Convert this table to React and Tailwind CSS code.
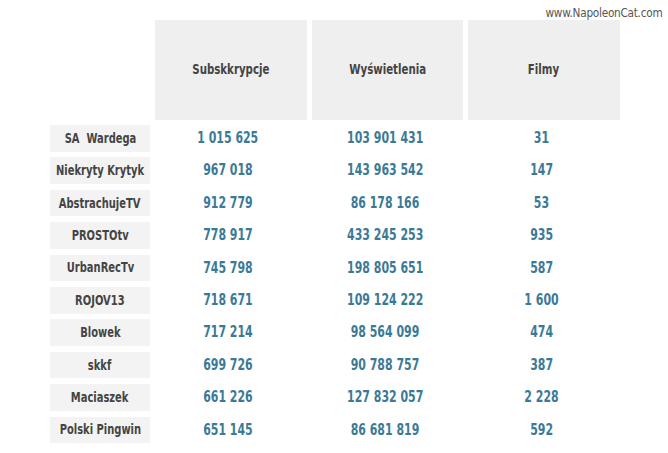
const rows = [
  ['SA  Wardega', '1 015 625', '103 901 431', '31'],
  ['Niekryty Krytyk', '967 018', '143 963 542', '147'],
  ['AbstrachujeTV', '912 779', '86 178 166', '53'],
  ['PROSTOtv', '778 917', '433 245 253', '935'],
  ['UrbanRecTv', '745 798', '198 805 651', '587'],
  ['ROJOV13', '718 671', '109 124 222', '1 600'],
  ['Blowek', '717 214', '98 564 099', '474'],
  ['skkf', '699 726', '90 788 757', '387'],
  ['Maciaszek', '661 226', '127 832 057', '2 228'],
  ['Polski Pingwin', '651 145', '86 681 819', '592'],
];

const headers = ['Subskkrypcje', 'Wyświetlenia', 'Filmy'];

const font = { fontFamily: '"DejaVu Sans", sans-serif' };

export default function App() {
  return (
    <div className="relative w-[668px] h-[453px] bg-white" style={font}>
      <div className="absolute right-[6px] top-[3px] text-[13px] text-[#555] tracking-tight">
        <span className="inline-block scale-x-[0.81] origin-right">www.NapoleonCat.com</span>
      </div>

      <div className="pt-[20px] pl-[50px]">
        {/* header row */}
        <div className="flex gap-[5px] h-[99.5px]">
          <div className="w-[100px]" />
          {headers.map((h) => (
            <div
              key={h}
              className="w-[151.5px] bg-[#efefef] flex items-center justify-center font-bold text-[14px] text-[#444]"
            >
              <span className="inline-block scale-x-[0.73]">{h}</span>
            </div>
          ))}
        </div>

        {/* data rows */}
        <div className="mt-[5.5px] flex flex-col gap-[5.8px]">
          {rows.map(([name, subs, views, films]) => (
            <div key={name} className="flex gap-[5px] h-[26.6px]">
              <div className="w-[100px] bg-[#f3f3f3] flex items-center justify-center font-bold text-[14px] text-[#444] whitespace-pre">
                <span className="inline-block scale-x-[0.71]">{name}</span>
              </div>
              {[subs, views, films].map((v, i) => (
                <div
                  key={i}
                  className="w-[151.5px] pr-[5px] flex items-center justify-center font-bold text-[15px] text-[#3b7a96] whitespace-pre"
                >
                  <span className="inline-block scale-x-[0.73]">{v}</span>
                </div>
              ))}
            </div>
          ))}
        </div>
      </div>
    </div>
  );
}
